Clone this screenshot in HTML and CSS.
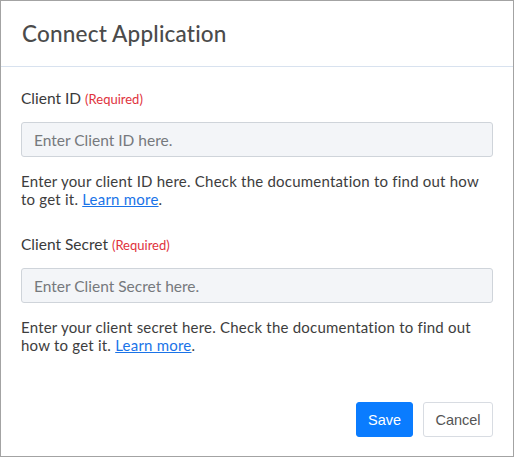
FILE: index.html
```html
<!DOCTYPE html>
<html>
<head>
<meta charset="utf-8">
<link rel="stylesheet" href="styles.css">
</head>
<body>
<div class="modal">
  <div class="modal-header">
    <h1 class="title">Connect Application</h1>
  </div>
  <div class="modal-body">
    <div class="field">
      <label class="label">Client ID <span class="req">(Required)</span></label>
      <input class="input" type="text" placeholder="Enter Client ID here.">
      <p class="help"><span>Enter your client ID here. Check the documentation to find out how</span> <span>to get it. <a href="#">Learn more</a>.</span></p>
    </div>
    <div class="field">
      <label class="label">Client Secret <span class="req">(Required)</span></label>
      <input class="input" type="text" placeholder="Enter Client Secret here.">
      <p class="help"><span>Enter your client secret here. Check the documentation to find out</span> <span>how to get it. <a href="#">Learn more</a>.</span></p>
    </div>
  </div>
  <div class="modal-footer">
    <button class="btn btn-primary">Save</button>
    <button class="btn btn-default">Cancel</button>
  </div>
</div>
</body>
</html>
```

FILE: styles.css
```css
* { box-sizing: border-box; }
html, body { margin: 0; padding: 0; background: #fff; }
body { font-family: Lato, "Open Sans", sans-serif; color: #3d3d3d; }
.modal {
  width: 514px;
  height: 457px;
  border: 1px solid #a3a3a3;
  display: flex;
  flex-direction: column;
  background: #fff;
}
.modal-header {
  height: 66px;
  flex-shrink: 0;
  border-bottom: 1px solid #d8e2ef;
  display: flex;
  align-items: center;
  padding: 0 21px;
}
.title {
  margin: 0;
  font-size: 22.5px;
  font-weight: 500;
  color: #4b4b4b;
  letter-spacing: 0.2px;
}
.modal-body {
  padding: 21px 20px 0 20px;
  display: flex;
  flex-direction: column;
  gap: 26px;
}
.field { display: flex; flex-direction: column; }
.label {
  font-size: 15.5px;
  line-height: 20px;
  color: #3a3a3a;
  margin-bottom: 13px;
}
.req { font-size: 13px; color: #e0323c; }
.input {
  height: 35px;
  border: 1px solid #cfd4da;
  border-radius: 3px;
  background: #f3f5f8;
  padding: 0 12px;
  font-family: inherit;
  font-size: 15.5px;
  color: #444;
  outline: none;
}
.input::placeholder { color: #76797d; }
.help {
  margin: 15px 0 0 0;
  font-size: 15px;
  letter-spacing: 0.22px;
  line-height: 18px;
  color: #3d3d3d;
}
.help a { color: #1a73e8; text-decoration: underline; }
.modal-footer {
  margin-top: auto;
  padding: 0 20px 19px 0;
  display: flex;
  justify-content: flex-end;
  gap: 10px;
}
.btn {
  height: 35px;
  border-radius: 3px;
  font-family: "Liberation Sans", Arial, sans-serif;
  font-size: 14.5px;
  padding: 0;
  cursor: pointer;
}
.btn-primary {
  background: #0a7cff;
  border: 1px solid #0a7cff;
  color: #fff;
  width: 57px;
}
.btn-default {
  background: #fff;
  border: 1px solid #d8dce2;
  color: #555;
  width: 70px;
}
```
